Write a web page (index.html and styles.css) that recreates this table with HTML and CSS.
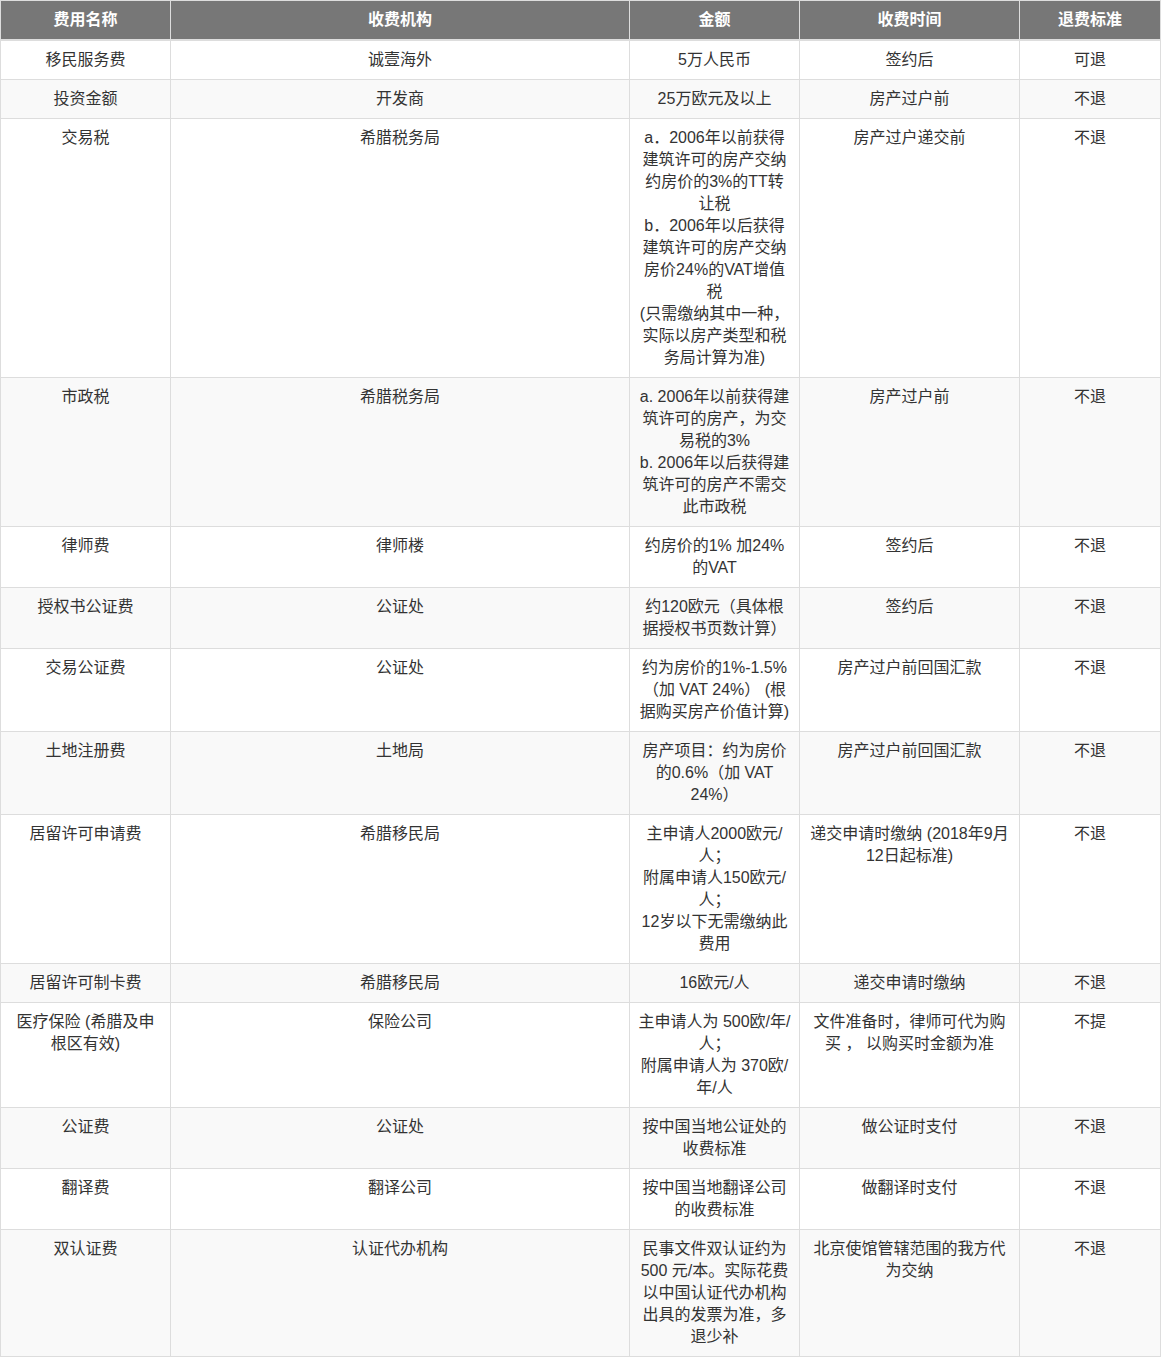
FILE: index.html
```html
<!DOCTYPE html>
<html lang="zh-CN">
<head>
<meta charset="utf-8">
<title>费用</title>
<link rel="stylesheet" href="styles.css">
</head>
<body>
<table class="fee-table">
  <colgroup>
    <col class="c1"><col class="c2"><col class="c3"><col class="c4"><col class="c5">
  </colgroup>
  <thead>
    <tr><th>费用名称</th><th>收费机构</th><th>金额</th><th>收费时间</th><th>退费标准</th></tr>
  </thead>
  <tbody>
    <tr><td>移民服务费</td><td>诚壹海外</td><td>5万人民币</td><td>签约后</td><td>可退</td></tr>
    <tr><td>投资金额</td><td>开发商</td><td>25万欧元及以上</td><td>房产过户前</td><td>不退</td></tr>
    <tr><td>交易税</td><td>希腊税务局</td><td>a．2006年以前获得建筑许可的房产交纳约房价的3%的TT转让税<br>b．2006年以后获得建筑许可的房产交纳房价24%的VAT增值税<br>(只需缴纳其中一种，实际以房产类型和税务局计算为准)</td><td>房产过户递交前</td><td>不退</td></tr>
    <tr><td>市政税</td><td>希腊税务局</td><td>a. 2006年以前获得建筑许可的房产，为交易税的3%<br>b. 2006年以后获得建筑许可的房产不需交此市政税</td><td>房产过户前</td><td>不退</td></tr>
    <tr><td>律师费</td><td>律师楼</td><td>约房价的1% 加24%的VAT</td><td>签约后</td><td>不退</td></tr>
    <tr><td>授权书公证费</td><td>公证处</td><td>约120欧元（具体根据授权书页数计算）</td><td>签约后</td><td>不退</td></tr>
    <tr><td>交易公证费</td><td>公证处</td><td>约为房价的1%-1.5%（加 VAT 24%） (根据购买房产价值计算)</td><td>房产过户前回国汇款</td><td>不退</td></tr>
    <tr><td>土地注册费</td><td>土地局</td><td>房产项目：约为房价的0.6%（加 VAT 24%）</td><td>房产过户前回国汇款</td><td>不退</td></tr>
    <tr><td>居留许可申请费</td><td>希腊移民局</td><td>主申请人2000欧元/人；<br>附属申请人150欧元/人；<br>12岁以下无需缴纳此费用</td><td>递交申请时缴纳 (2018年9月12日起标准)</td><td>不退</td></tr>
    <tr><td>居留许可制卡费</td><td>希腊移民局</td><td>16欧元/人</td><td>递交申请时缴纳</td><td>不退</td></tr>
    <tr><td>医疗保险 (希腊及申<br>根区有效)</td><td>保险公司</td><td>主申请人为 500欧/年/<br>人；<br>附属申请人为 370欧/年/人</td><td>文件准备时，律师可代为购买 ， 以购买时金额为准</td><td>不提</td></tr>
    <tr><td>公证费</td><td>公证处</td><td>按中国当地公证处的收费标准</td><td>做公证时支付</td><td>不退</td></tr>
    <tr><td>翻译费</td><td>翻译公司</td><td>按中国当地翻译公司的收费标准</td><td>做翻译时支付</td><td>不退</td></tr>
    <tr><td>双认证费</td><td>认证代办机构</td><td>民事文件双认证约为500 元/本。实际花费以中国认证代办机构出具的发票为准，多退少补</td><td>北京使馆管辖范围的我方代为交纳</td><td>不退</td></tr>
  </tbody>
</table>
</body>
</html>
```

FILE: styles.css
```css
html, body {
  margin: 0;
  padding: 0;
  background: #fff;
}
body {
  font-family: "Liberation Sans", "Noto Sans CJK SC", sans-serif;
  font-size: 16px;
  line-height: 22px;
  color: #333;
}
.fee-table {
  border-collapse: collapse;
  table-layout: fixed;
  width: 1160px;
}
.c1 { width: 170px; }
.c2 { width: 459px; }
.c3 { width: 170px; }
.c4 { width: 220px; }
.c5 { width: 141px; }
.fee-table th,
.fee-table td {
  border: 1px solid #ddd;
  padding: 8px;
  text-align: center;
  vertical-align: top;
  word-wrap: break-word;
}
.fee-table th {
  background: #777;
  color: #fff;
  font-weight: bold;
  border-bottom-width: 2px;
}
.fee-table tbody tr:nth-child(even) td {
  background: #f9f9f9;
}
```
